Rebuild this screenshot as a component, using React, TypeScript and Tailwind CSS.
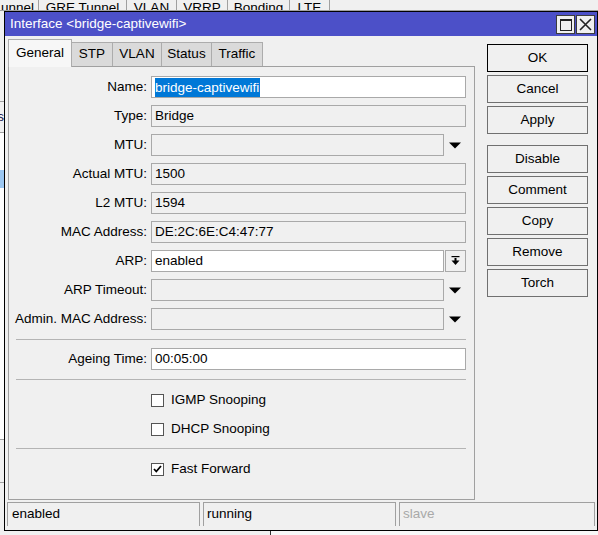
import React from "react";

type Row = { label: string; value: string; kind: "name" | "ro" | "combo" | "arp" };

const rows: Row[] = [
  { label: "Name:", value: "bridge-captivewifi", kind: "name" },
  { label: "Type:", value: "Bridge", kind: "ro" },
  { label: "MTU:", value: "", kind: "combo" },
  { label: "Actual MTU:", value: "1500", kind: "ro" },
  { label: "L2 MTU:", value: "1594", kind: "ro" },
  { label: "MAC Address:", value: "DE:2C:6E:C4:47:77", kind: "ro" },
  { label: "ARP:", value: "enabled", kind: "arp" },
  { label: "ARP Timeout:", value: "", kind: "combo" },
  { label: "Admin. MAC Address:", value: "", kind: "combo" },
];

const bgTabs = [
  { text: "unnel", w: "w-[39px]", left: true },
  { text: "GRE Tunnel", w: "w-[88px]" },
  { text: "VLAN", w: "w-[50px]" },
  { text: "VRRP", w: "w-[51px]" },
  { text: "Bonding", w: "w-[62px]" },
  { text: "LTE", w: "w-[40px]" },
];

const tabs = ["General", "STP", "VLAN", "Status", "Traffic"];

function DownTriangle() {
  return (
    <svg width="12" height="7" viewBox="0 0 12 7">
      <path d="M0 0.5h12L6 6.5z" fill="#000" />
    </svg>
  );
}

function ArpIcon() {
  return (
    <svg width="9" height="10" viewBox="0 0 9 10">
      <rect x="0.5" y="0" width="8" height="1.2" fill="#000" />
      <rect x="3.5" y="2" width="2" height="3" fill="#000" />
      <path d="M0.5 4.5h8L4.5 9z" fill="#000" />
    </svg>
  );
}

function Field({ row }: { row: Row }) {
  const box = "h-[22px] border border-[#a9a9a9] flex items-center pl-[3px] overflow-hidden whitespace-nowrap";
  let control: React.ReactNode;
  if (row.kind === "name") {
    control = (
      <div className={`${box} w-[315px] bg-white`}>
        <span className="bg-[#0078d7] text-white leading-[19px] pr-[1px]">{row.value}</span>
      </div>
    );
  } else if (row.kind === "ro") {
    control = <div className={`${box} w-[315px] bg-[#f0f0f0]`}>{row.value}</div>;
  } else if (row.kind === "combo") {
    control = (
      <div className="flex items-center">
        <div className={`${box} w-[293px] bg-[#f0f0f0]`}>{row.value}</div>
        <div className="w-[22px] flex justify-center">
          <DownTriangle />
        </div>
      </div>
    );
  } else {
    control = (
      <div className="flex items-center gap-[1px]">
        <div className={`${box} w-[293px] bg-white`}>{row.value}</div>
        <div className="w-[21px] h-[22px] border border-[#a9a9a9] bg-[#f0f0f0] flex items-center justify-center">
          <ArpIcon />
        </div>
      </div>
    );
  }
  return (
    <div className="flex items-center h-[22px] gap-[4px]">
      <div className="w-[138px] text-right whitespace-nowrap">{row.label}</div>
      {control}
    </div>
  );
}

function Check({ label, checked }: { label: string; checked?: boolean }) {
  return (
    <div className="flex items-center h-[22px] pl-[142px]">
      <div className="w-[13px] h-[13px] border border-[#555] bg-white flex items-center justify-center">
        {checked && (
          <svg width="9" height="8" viewBox="0 0 9 8">
            <path d="M1 4l2.3 2.5L8 1" stroke="#000" strokeWidth="1.8" fill="none" />
          </svg>
        )}
      </div>
      <span className="ml-[7px]">{label}</span>
    </div>
  );
}

function Sep() {
  return <div className="ml-[7px] w-[450px] border-t border-[#b4b4b4]" />;
}

function Btn({ label, focus }: { label: string; focus?: boolean }) {
  return (
    <div
      className={`w-[101px] h-[28px] flex items-center justify-center bg-[#f0f0f0] border ${
        focus ? "border-black" : "border-[#707070]"
      }`}
    >
      {label}
    </div>
  );
}

export default function App() {
  return (
    <div className="relative w-[598px] h-[535px] overflow-hidden bg-[#f0f0f0] text-[13.5px] text-black font-['Liberation_Sans',Arial,sans-serif] flex flex-col">
      {/* window behind */}
      <div className="flex h-[11px] overflow-hidden border-b border-[#a0a0a0]">
        {bgTabs.map((t) => (
          <div
            key={t.text}
            className={`${t.w} shrink-0 border-r border-[#a0a0a0] flex ${t.left ? "justify-end pr-[4px]" : "justify-center"} overflow-hidden`}
          >
            <span className="leading-[15px] whitespace-nowrap">{t.text}</span>
          </div>
        ))}
      </div>
      <div className="flex-1 flex">
        <div className="w-[4px] flex flex-col">
          <div className="h-[90px]" />
          <div className="border-t border-[#a0a0a0]" />
          <div className="h-[30px] flex items-center justify-end overflow-hidden">
            <span className="text-[#1a1a50] whitespace-nowrap">s</span>
          </div>
          <div className="border-t border-[#a0a0a0]" />
          <div className="h-[37px] bg-white" />
          <div className="h-[18px] bg-[#9cc7f1]" />
          <div className="h-[251px] bg-white" />
          <div className="border-t border-[#a0a0a0]" />
          <div className="h-[42px]" />
          <div className="border-t border-[#a0a0a0]" />
        </div>
      </div>
      <div className="h-[4px] flex">
        <div className="w-[271px] border-r border-[#333]" />
        <div className="flex-1 bg-[#f8f8f8]" />
      </div>

      {/* dialog window */}
      <div className="absolute left-[4px] top-[11px] w-[594px] h-[520px] border border-black bg-[#f0f0f0] flex flex-col">
        <div className="h-[24px] bg-[#4c50c8] flex items-center pl-[5px]">
          <span className="text-white flex-1 whitespace-nowrap">Interface &lt;bridge-captivewifi&gt;</span>
          <div className="flex gap-[1px] mr-[2px] mt-[1px]">
            <div className="w-[19px] h-[19px] border border-[#3c3c3c] bg-[#f0f0f0] flex items-center justify-center">
              <div className="w-[12px] h-[12px] border border-[#222] border-t-2" />
            </div>
            <div className="w-[19px] h-[19px] border border-[#3c3c3c] bg-[#f0f0f0] flex items-center justify-center">
              <svg width="13" height="13" viewBox="0 0 13 13">
                <path d="M1 1l11 11M12 1L1 12" stroke="#222" strokeWidth="1.6" />
              </svg>
            </div>
          </div>
        </div>

        <div className="flex pt-[3px]">
          <div className="ml-[3px] w-[467px] flex flex-col">
            <div className="relative z-10 flex h-[27px]">
              {tabs.map((t, i) =>
                i === 0 ? (
                  <div
                    key={t}
                    className="h-[28px] w-[64px] justify-center border border-b-0 border-[#acacac] bg-[#f7f7f7] flex items-center"
                  >
                    {t}
                  </div>
                ) : (
                  <div
                    key={t}
                    className={`mt-[3px] h-[24px] ${
                      t === "STP" ? "w-[41px]" : t === "VLAN" ? "w-[49px]" : t === "Status" ? "w-[50px]" : "w-[51px]"
                    } justify-center border border-l-0 border-b-0 border-[#acacac] bg-[#dadada] flex items-center`}
                  >
                    {t}
                  </div>
                )
              )}
            </div>
            <div className="h-[434px] border border-[#a0a0a0] flex flex-col pt-[9px]">
              <div className="flex flex-col gap-[7px]">
                {rows.map((r) => (
                  <Field key={r.label} row={r} />
                ))}
              </div>
              <div className="mt-[9px]">
                <Sep />
              </div>
              <div className="mt-[8px]">
                <div className="flex items-center h-[22px] gap-[4px]">
                  <div className="w-[138px] text-right">Ageing Time:</div>
                  <div className="h-[22px] w-[315px] border border-[#a9a9a9] bg-white flex items-center pl-[3px]">
                    00:05:00
                  </div>
                </div>
              </div>
              <div className="mt-[9px]">
                <Sep />
              </div>
              <div className="mt-[9px] flex flex-col gap-[7px]">
                <Check label="IGMP Snooping" />
                <Check label="DHCP Snooping" />
              </div>
              <div className="mt-[8px]">
                <Sep />
              </div>
              <div className="mt-[9px]">
                <Check label="Fast Forward" checked />
              </div>
            </div>
          </div>

          <div className="ml-[12px] pt-[5px] flex flex-col gap-[3px]">
            <Btn label="OK" focus />
            <Btn label="Cancel" />
            <Btn label="Apply" />
            <div className="h-[5px]" />
            <Btn label="Disable" />
            <Btn label="Comment" />
            <Btn label="Copy" />
            <Btn label="Remove" />
            <Btn label="Torch" />
          </div>
        </div>

        <div className="mt-[2px] ml-[2px] flex gap-[3px]">
          <div className="w-[193px] h-[24px] border border-b-0 border-[#a0a0a0] flex items-center pl-[4px]">enabled</div>
          <div className="w-[193px] h-[24px] border border-b-0 border-[#a0a0a0] flex items-center pl-[3px]">running</div>
          <div className="w-[196px] h-[24px] border border-b-0 border-[#a0a0a0] flex items-center pl-[3px] text-[#a9a9a9]">
            slave
          </div>
        </div>
      </div>
    </div>
  );
}
